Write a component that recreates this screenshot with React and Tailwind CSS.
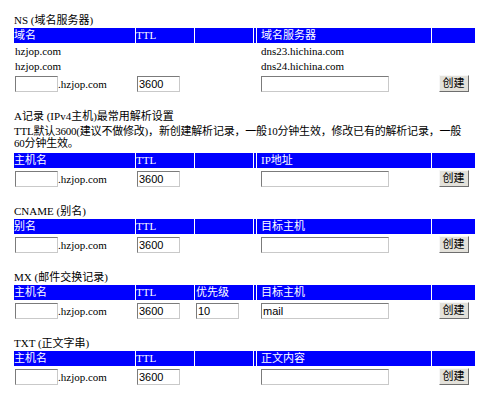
import React from 'react';

const SERIF = "font-['Liberation_Serif','Noto_Sans_CJK_SC',serif]";

const HeadCell = ({ children, className = '' }) => (
	<div className={`h-[15px] bg-[#0000ff] text-white text-[11px] leading-[15px] whitespace-nowrap overflow-hidden ${className}`}>
		{children}
	</div>
);

const TextCell = ({ children, className = '' }) => (
	<div className={`h-[14px] text-[11px] leading-[14px] whitespace-nowrap ${className}`}>{children}</div>
);

const InputCell = ({ children, className = '' }) => (
	<div className={`h-[19px] flex items-center ${className}`}>{children}</div>
);

const Field = ({ width = 'w-[43px]', value = '', className = '' }) => (
	<input
		type="text"
		defaultValue={value}
		className={`${width} h-[16px] mt-px px-px bg-white border border-t-[#7b7b7b] border-l-[#7b7b7b] border-r-[#c9c9c9] border-b-[#c9c9c9] text-[11px] leading-none text-black font-['Liberation_Sans','Noto_Sans_CJK_SC',sans-serif] outline-none ${className}`}
	/>
);

const CreateButton = () => (
	<button className="h-[17px] w-[30px] bg-[#e3e1da] border border-t-[#f7f7f7] border-l-[#f7f7f7] border-r-[#6e6e6e] border-b-[#6e6e6e] text-[11px] leading-none text-black">
		创建
	</button>
);

// one record table: header + a row of inputs
const Record = ({ cols, extra }) => (
	<div className="grid grid-cols-[121px_58px_58px_2px_174px_43px] gap-px pt-px pb-px w-[461px]">
		<HeadCell>{cols[0]}</HeadCell>
		<HeadCell>TTL</HeadCell>
		<HeadCell className="pl-px">{cols[1]}</HeadCell>
		<HeadCell />
		<HeadCell className="pl-[4px]">{cols[2]}</HeadCell>
		<HeadCell />

		<InputCell>
			<Field className="ml-px" />
			<span className="text-[11px] mt-[2px]">.hzjop.com</span>
		</InputCell>
		<InputCell>
			<Field className="ml-px" value="3600" />
		</InputCell>
		<InputCell>{extra ? <Field className="ml-px" value={extra} /> : null}</InputCell>
		<InputCell />
		<InputCell>
			<Field className="ml-[4px]" width="w-[128px]" value={cols[3] || ''} />
		</InputCell>
		<InputCell className="justify-center">
			<CreateButton />
		</InputCell>
	</div>
);

const Title = ({ children }) => (
	<div className="h-[14px] text-[11px] leading-[14px] whitespace-nowrap">{children}</div>
);

export default function App() {
	return (
		<div className={`min-h-screen bg-white text-black ${SERIF}`}>
			<div className="pl-[14px] pt-[13px] flex flex-col gap-[15px]">
				{/* NS */}
				<div>
					<Title>NS (域名服务器)</Title>
					<div className="grid grid-cols-[121px_58px_58px_2px_174px_43px] gap-px pt-px pb-px w-[461px]">
						<HeadCell>域名</HeadCell>
						<HeadCell>TTL</HeadCell>
						<HeadCell />
						<HeadCell />
						<HeadCell className="pl-[4px]">域名服务器</HeadCell>
						<HeadCell />

						<TextCell className="pl-px">hzjop.com</TextCell>
						<TextCell />
						<TextCell />
						<TextCell />
						<TextCell className="pl-[4px]">dns23.hichina.com</TextCell>
						<TextCell />

						<TextCell className="pl-px">hzjop.com</TextCell>
						<TextCell />
						<TextCell />
						<TextCell />
						<TextCell className="pl-[4px]">dns24.hichina.com</TextCell>
						<TextCell />

						<InputCell>
							<Field className="ml-px" />
							<span className="text-[11px] mt-[2px]">.hzjop.com</span>
						</InputCell>
						<InputCell>
							<Field className="ml-px" value="3600" />
						</InputCell>
						<InputCell />
						<InputCell />
						<InputCell>
							<Field className="ml-[4px]" width="w-[128px]" />
						</InputCell>
						<InputCell className="justify-center">
							<CreateButton />
						</InputCell>
					</div>
				</div>

				{/* A */}
				<div>
					<Title>A记录 (IPv4主机)最常用解析设置</Title>
					<p className="mt-[2px] mb-[3px] text-[11px] leading-[12px] whitespace-nowrap tracking-[-0.2px]">
						TTL默认3600(建议不做修改)，新创建解析记录，一般10分钟生效，修改已有的解析记录，一般
						<br />
						60分钟生效。
					</p>
					<Record cols={['主机名', '', 'IP地址']} />
				</div>

				{/* CNAME */}
				<div>
					<Title>CNAME (别名)</Title>
					<Record cols={['别名', '', '目标主机']} />
				</div>

				{/* MX */}
				<div>
					<Title>MX (邮件交换记录)</Title>
					<Record cols={['主机名', '优先级', '目标主机', 'mail']} extra="10" />
				</div>

				{/* TXT */}
				<div>
					<Title>TXT (正文字串)</Title>
					<Record cols={['主机名', '', '正文内容']} />
				</div>
			</div>
		</div>
	);
}
